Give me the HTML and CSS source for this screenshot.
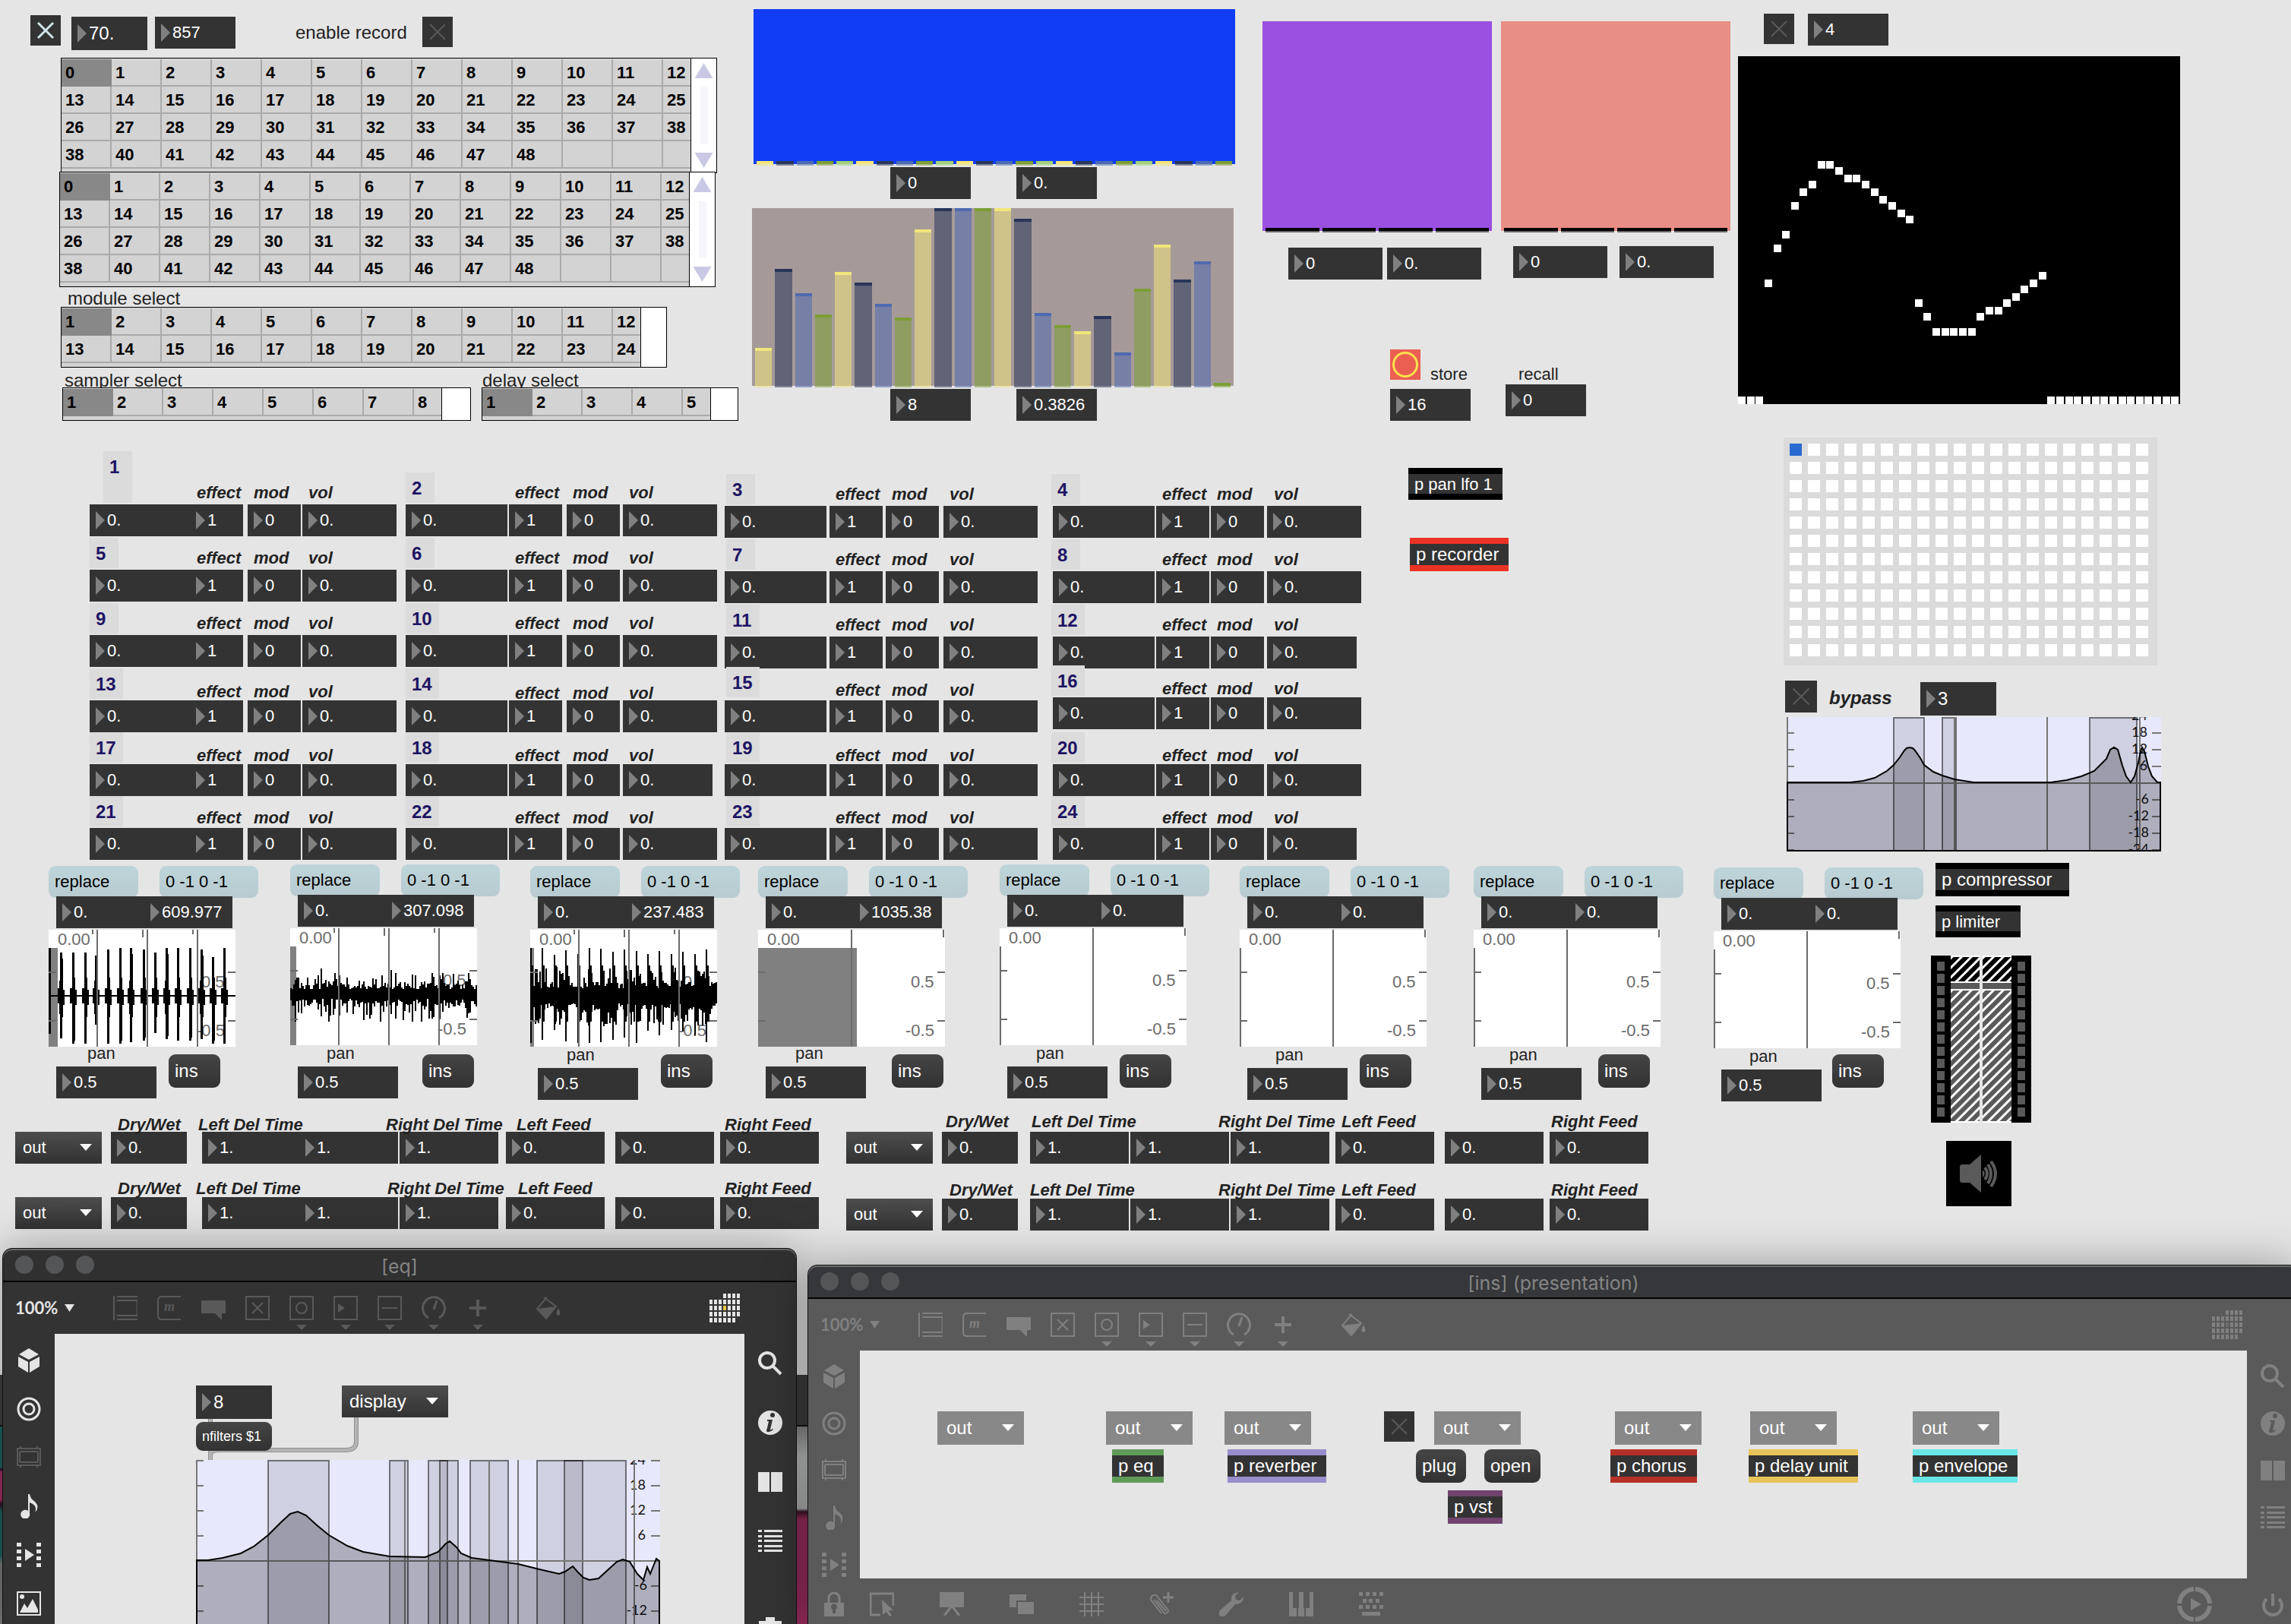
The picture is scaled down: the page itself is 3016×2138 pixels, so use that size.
FILE: index.html
```html
<!DOCTYPE html>
<html lang="en">
<head>
<meta charset="utf-8">
<meta name="viewport" content="width=device-width, initial-scale=1">
<title>Patcher</title>
<link rel="stylesheet" href="styles.css">
</head>
<body>
<svg class="symbols" aria-hidden="true">
  <symbol id="i-object" viewBox="0 0 32 32"><path class="ln" d="M1 0V32M5 1H32M5 6H32M5 26H32M5 31H32"/><path class="hair" d="M31 6V26"/></symbol>
  <symbol id="i-message" viewBox="0 0 32 32"><path class="ln" d="M31 1H6Q1 1 1 6V26Q1 31 6 31H31"/></symbol>
  <symbol id="i-comment" viewBox="0 0 32 32"><path class="fl" d="M0 6H32V23H27V32L18 23H0Z"/></symbol>
  <symbol id="i-toggle" viewBox="0 0 32 32"><path class="ln" d="M1 1H31V31H1ZM9 9L23 23M23 9L9 23"/></symbol>
  <symbol id="i-button" viewBox="0 0 32 32"><path class="ln" d="M1 1H31V31H1Z"/><circle class="ln" cx="16" cy="16" r="7"/></symbol>
  <symbol id="i-number" viewBox="0 0 32 32"><path class="ln" d="M1 1H31V31H1Z"/><path class="fl" d="M6 10L15 16L6 22Z"/></symbol>
  <symbol id="i-slider" viewBox="0 0 32 32"><path class="ln" d="M1 1H31V31H1ZM6 16H26"/></symbol>
  <symbol id="i-dial" viewBox="0 0 32 32"><path class="thick" d="M9 29A14.500 14.500 0 1 1 23 29M16 18L20 6"/></symbol>
  <symbol id="i-plus" viewBox="0 0 32 32"><path class="fl" d="M14 5H18V14H27V18H18V27H14V18H5V14H14Z"/></symbol>
  <symbol id="i-paint" viewBox="0 0 32 32"><path class="ln" d="M10 2L26 14L13 30L1 17L14 2"/><path class="fl" d="M1 17L26 14L13 31ZM29 16Q34 25 29 26Q24 25 29 16Z"/></symbol>
  <symbol id="i-cube" viewBox="0 0 32 32"><path class="fl" d="M16 0L29 8L16 15L3 8ZM2 11L15 18V32L2 24ZM30 11L17 18V32L30 24Z"/></symbol>
  <symbol id="i-target" viewBox="0 0 32 32"><circle class="thick" cx="16" cy="16" r="14"/><circle class="thick" cx="16" cy="16" r="7"/></symbol>
  <symbol id="i-amp" viewBox="0 0 32 32"><path class="ln" d="M1 4H31V26H1ZM4 8H28M4 22H28M5 1V4M27 1V4M5 26V29M27 26V29M28 8V22M4 8V22"/></symbol>
  <symbol id="i-note" viewBox="0 0 32 32"><path class="fl" d="M15 0H17Q18 6 24 10Q31 17 24 24Q28 15 17 11V25A6 6 0 1 1 15 22Z"/></symbol>
  <symbol id="i-film" viewBox="0 0 32 32"><path class="fl" d="M0 0H6V5H0ZM0 9H6V14H0ZM0 18H6V23H0ZM0 27H6V32H0ZM26 0H32V5H26ZM26 9H32V14H26ZM26 18H32V23H26ZM26 27H32V32H26ZM11 8L23 16L11 24Z"/></symbol>
  <symbol id="i-image" viewBox="0 0 32 32"><path class="ln" d="M1 1H31V31H1Z"/><path class="fl" d="M4 28L10 16L14 22L21 10L28 24V28Z"/><circle class="fl" cx="7" cy="7" r="3"/></symbol>
  <symbol id="i-search" viewBox="0 0 32 32"><circle class="heavy" cx="12" cy="12" r="10"/><path class="heavy" d="M19 19L30 30"/></symbol>
  <symbol id="i-info" viewBox="0 0 32 32"><circle class="fl" cx="16" cy="16" r="16"/><circle class="cut" cx="19" cy="6" r="3"/><path class="cut" d="M12 12H19L16 25Q17 26 19 24L20 25Q16 29 12 28Q10 27 12 23L14 14H12Z"/></symbol>
  <symbol id="i-book" viewBox="0 0 32 32"><path class="fl" d="M0 3H15V29H0ZM17 3H32V29H17Z"/></symbol>
  <symbol id="i-list" viewBox="0 0 32 32"><path class="fl" d="M0 1H5V4H0ZM8 1H32V4H8ZM0 8H5V11H0ZM8 8H32V11H8ZM0 14H5V17H0ZM8 14H32V17H8ZM0 21H5V24H0ZM8 21H32V24H8ZM0 27H5V30H0ZM8 27H32V30H8Z"/></symbol>
  <symbol id="i-camera" viewBox="0 0 32 32"><path class="fl" d="M10 0H22V5H31V30H1V5H10Z"/></symbol>
  <symbol id="i-lock" viewBox="0 0 32 32"><path class="thick" d="M9 15V8A7 7 0 0 1 23 8V15"/><path class="fl" fill-rule="evenodd" d="M3 14H29V32H3ZM14 28H18V23A4 4 0 1 0 14 23Z"/></symbol>
  <symbol id="i-cursor" viewBox="0 0 32 32"><path class="thick" d="M14 30H1V2H31V18"/><path class="fl" d="M16 10L31 24H25L29 31L26 32L22 26L17 30Z"/></symbol>
  <symbol id="i-easel" viewBox="0 0 32 32"><path class="fl" d="M0 0H32V20H0Z"/><path class="thick" d="M16 18L6 31M16 18L26 31"/></symbol>
  <symbol id="i-layers" viewBox="0 0 32 32"><path class="fl" d="M0 3H22V11H9V20H0ZM11 13H32V29H11Z"/></symbol>
  <symbol id="i-grid" viewBox="0 0 32 32"><path class="ln" d="M7 0V32M16 0V32M25 0V32M0 7H32M0 16H32M0 25H32"/></symbol>
  <symbol id="i-clip" viewBox="0 0 32 32"><path class="ln" d="M6 10L20 28A4 4 0 0 0 25 24L10 5A5 5 0 0 0 2 10L16 28M22 25L10 11"/><path class="thick" d="M25 0V14M18 7H32"/></symbol>
  <symbol id="i-wrench" viewBox="0 0 32 32"><path class="fl" d="M26 0L21 5L22 10L27 11L32 6Q32 16 21 16L8 31Q4 34 1 31Q-2 28 1 24L16 11Q15 1 26 0Z"/></symbol>
  <symbol id="i-piano" viewBox="0 0 32 32"><path class="fl" d="M0 0H5V21H10V32H0ZM12 21H13V0H19V21H20V32H12ZM27 0H32V32H22V21H27Z"/></symbol>
  <symbol id="i-keys" viewBox="0 0 32 32"><path class="fl" d="M0 0H5V5H0ZM9 0H14V5H9ZM18 0H23V5H18ZM27 0H32V5H27ZM5 9H10V14H5ZM13 9H18V14H13ZM22 9H27V14H22ZM0 17H5V22H0ZM9 17H14V22H9ZM18 17H23V22H18ZM27 17H32V22H27ZM4 26H28V31H4Z"/></symbol>
  <symbol id="i-play" viewBox="0 0 46 46"><path class="ring" d="M24 3A20 20 0 0 1 43 22M43 25A20 20 0 0 1 24 43M22 43A20 20 0 0 1 3 25M3 22A20 20 0 0 1 22 3"/><path class="fl" d="M18 15L32 23L18 31Z"/></symbol>
  <symbol id="i-power" viewBox="0 0 32 32"><path class="heavy" d="M16 2V18M8 9A12 12 0 1 0 24 9"/></symbol>
  <symbol id="i-calendar" viewBox="0 0 40 38"><path class="fl" d="M18 0h4v6h-4zM24 0h4v6h-4zM30 0h4v6h-4zM36 0h4v6h-4zM0 8h4v6h-4zM6 8h4v6h-4zM12 8h4v6h-4zM18 8h4v6h-4zM24 8h4v6h-4zM30 8h4v6h-4zM36 8h4v6h-4zM0 16h4v6h-4zM6 16h4v6h-4zM12 16h4v6h-4zM24 16h4v6h-4zM30 16h4v6h-4zM36 16h4v6h-4zM0 24h4v6h-4zM6 24h4v6h-4zM12 24h4v6h-4zM18 24h4v6h-4zM24 24h4v6h-4zM30 24h4v6h-4zM36 24h4v6h-4zM0 32h4v6h-4zM6 32h4v6h-4zM12 32h4v6h-4zM18 32h4v6h-4zM24 32h4v6h-4zM30 32h4v6h-4z"/><path class="today" d="M18 16h4v6h-4z"/></symbol>
</svg>

<div class="desktop">
  <main class="patcher" id="patcher"></main>
  <div class="patcher-bar"></div>
  <div class="wallpaper"></div>

  <section class="window window-eq" aria-label="eq">
    <header class="titlebar">
      <span class="lights"><i></i><i></i><i></i></span>
      <h2>[eq]</h2>
    </header>
    <nav class="toolbar" aria-label="eq objects">
      <button class="zoom">100%</button>
      <button class="tool" aria-label="Object"><svg><use href="#i-object"/></svg></button>
      <button class="tool" aria-label="Message"><svg><use href="#i-message"/></svg><span class="glyph">m</span></button>
      <button class="tool" aria-label="Comment"><svg><use href="#i-comment"/></svg></button>
      <button class="tool" aria-label="Toggle"><svg><use href="#i-toggle"/></svg></button>
      <button class="tool more" aria-label="Button"><svg><use href="#i-button"/></svg></button>
      <button class="tool more" aria-label="Number"><svg><use href="#i-number"/></svg></button>
      <button class="tool more" aria-label="Slider"><svg><use href="#i-slider"/></svg></button>
      <button class="tool more" aria-label="Dial"><svg><use href="#i-dial"/></svg></button>
      <button class="tool more" aria-label="Add"><svg><use href="#i-plus"/></svg></button>
      <button class="tool paint" aria-label="Format"><svg><use href="#i-paint"/></svg></button>
      <button class="calendar" aria-label="Grid"><svg><use href="#i-calendar"/></svg></button>
    </nav>
    <nav class="side" aria-label="eq browsers">
      <button class="tool" aria-label="Packages"><svg><use href="#i-cube"/></svg></button>
      <button class="tool" aria-label="Beap"><svg><use href="#i-target"/></svg></button>
      <button class="tool dim" aria-label="Plug-ins"><svg><use href="#i-amp"/></svg></button>
      <button class="tool" aria-label="Audio"><svg><use href="#i-note"/></svg></button>
      <button class="tool" aria-label="Video"><svg><use href="#i-film"/></svg></button>
      <button class="tool" aria-label="Images"><svg><use href="#i-image"/></svg></button>
    </nav>
    <div class="canvas" id="canvas-eq"></div>
    <nav class="side side-right" aria-label="eq panels">
      <button class="tool" aria-label="Search"><svg><use href="#i-search"/></svg></button>
      <button class="tool" aria-label="Inspector"><svg><use href="#i-info"/></svg></button>
      <button class="tool" aria-label="Reference"><svg><use href="#i-book"/></svg></button>
      <button class="tool" aria-label="Console"><svg><use href="#i-list"/></svg></button>
      <button class="tool snapshot" aria-label="Snapshots"><svg><use href="#i-camera"/></svg></button>
    </nav>
  </section>

  <section class="window window-ins" aria-label="ins">
    <header class="titlebar">
      <span class="lights"><i></i><i></i><i></i></span>
      <h2>[ins] (presentation)</h2>
    </header>
    <nav class="toolbar" aria-label="ins objects">
      <button class="zoom">100%</button>
      <button class="tool" aria-label="Object"><svg><use href="#i-object"/></svg></button>
      <button class="tool" aria-label="Message"><svg><use href="#i-message"/></svg><span class="glyph">m</span></button>
      <button class="tool" aria-label="Comment"><svg><use href="#i-comment"/></svg></button>
      <button class="tool" aria-label="Toggle"><svg><use href="#i-toggle"/></svg></button>
      <button class="tool more" aria-label="Button"><svg><use href="#i-button"/></svg></button>
      <button class="tool more" aria-label="Number"><svg><use href="#i-number"/></svg></button>
      <button class="tool more" aria-label="Slider"><svg><use href="#i-slider"/></svg></button>
      <button class="tool more" aria-label="Dial"><svg><use href="#i-dial"/></svg></button>
      <button class="tool more" aria-label="Add"><svg><use href="#i-plus"/></svg></button>
      <button class="tool paint" aria-label="Format"><svg><use href="#i-paint"/></svg></button>
      <button class="calendar" aria-label="Grid"><svg><use href="#i-calendar"/></svg></button>
    </nav>
    <nav class="side" aria-label="ins browsers">
      <button class="tool" aria-label="Packages"><svg><use href="#i-cube"/></svg></button>
      <button class="tool" aria-label="Beap"><svg><use href="#i-target"/></svg></button>
      <button class="tool" aria-label="Plug-ins"><svg><use href="#i-amp"/></svg></button>
      <button class="tool" aria-label="Audio"><svg><use href="#i-note"/></svg></button>
      <button class="tool" aria-label="Video"><svg><use href="#i-film"/></svg></button>
    </nav>
    <div class="canvas" id="canvas-ins"></div>
    <nav class="side side-right" aria-label="ins panels">
      <button class="tool" aria-label="Search"><svg><use href="#i-search"/></svg></button>
      <button class="tool" aria-label="Inspector"><svg><use href="#i-info"/></svg></button>
      <button class="tool" aria-label="Reference"><svg><use href="#i-book"/></svg></button>
      <button class="tool" aria-label="Console"><svg><use href="#i-list"/></svg></button>
    </nav>
    <nav class="bottombar" aria-label="ins view">
      <button class="tool lock" aria-label="Lock"><svg><use href="#i-lock"/></svg></button>
      <button class="tool" aria-label="Select"><svg><use href="#i-cursor"/></svg></button>
      <button class="tool" aria-label="Presentation"><svg><use href="#i-easel"/></svg></button>
      <button class="tool" aria-label="Layers"><svg><use href="#i-layers"/></svg></button>
      <button class="tool" aria-label="Snap to grid"><svg><use href="#i-grid"/></svg></button>
      <button class="tool" aria-label="Clippings"><svg><use href="#i-clip"/></svg></button>
      <button class="tool" aria-label="Tools"><svg><use href="#i-wrench"/></svg></button>
      <button class="tool" aria-label="Piano"><svg><use href="#i-piano"/></svg></button>
      <button class="tool" aria-label="Keyboard"><svg><use href="#i-keys"/></svg></button>
      <button class="tool play" aria-label="Play"><svg><use href="#i-play"/></svg></button>
      <button class="tool power" aria-label="Audio power"><svg><use href="#i-power"/></svg></button>
    </nav>
  </section>
</div>
<script src="patch.js"></script>
</body>
</html>
```

FILE: styles.css
```css
* { box-sizing: border-box; }

body {
  margin: 0;
  font: 22px/28px "Liberation Sans", Arial, sans-serif;
  color: #222;
  background: #e5e5e5;
}

button, input, select {
  margin: 0;
  padding: 0;
  border: 0;
  border-radius: 0;
  font: inherit;
  color: inherit;
  background: none;
  appearance: none;
}

.symbols { position: absolute; width: 0; height: 0; }

.desktop {
  position: relative;
  display: flex;
  flex-direction: column;
  height: 100vh;
  overflow: hidden;
}
.patcher { position: relative; flex: 1; background: #e5e5e5; }
.patcher-bar { flex: none; height: 68px; background: #3f3f3f; border-bottom: 2px solid #111; }
.wallpaper {
  flex: none;
  height: 260px;
  background:
    linear-gradient(#1f5f5c 54px, #2a1020 56px, #9c2e5f 60px, #9c2e5f 96px, #2a1020 102px, #1f5f5c 112px, #1f5f5c 170px, #777 180px) 0 0 / 6px 100% no-repeat,
    linear-gradient(#8a8a8a, #c2c4c4 40px, #b5b7b7 108px, #3a1428 112px, #9c2e5f 122px, #9c2e5f);
}

/* ---- objects on the patcher ---- */
.obj { position: absolute; }
.num {
  display: block;
  height: 42px;
  background: #333;
  color: #fff;
}
.num::before {
  content: "";
  position: absolute;
  left: 8px;
  top: 50%;
  width: 12px;
  height: 24px;
  margin-top: -12px;
  background: #808080;
  clip-path: polygon(0 0, 100% 50%, 0 100%);
}
.num input { display: block; width: 100%; height: 100%; padding-left: 23px; }
.big { height: 44px; font-size: 24px; }

.toggle { width: 40px; height: 40px; background: #333; color: #595959; }
.toggle.on { color: #cfe3ea; }
.toggle.large { width: 42px; height: 42px; }
.toggle input { position: absolute; inset: 0; width: 100%; height: 100%; }
.toggle svg { display: block; width: 100%; height: 100%; pointer-events: none; }
.toggle path { fill: none; stroke: currentColor; stroke-width: 2; }
.toggle.on path { stroke-width: 3; }

.comment { white-space: nowrap; }
.comment.wide { font-size: 24px; }
.comment.strong { font-weight: bold; font-style: italic; }

.tag {
  min-width: 38px;
  height: 40px;
  padding: 7px 8px 5px;
  font-size: 24px;
  font-weight: bold;
  color: #1e1464;
  background: #dbdbdb;
}
.tag.two { min-width: 44px; }
.tag.tall { height: 68px; }

.msg {
  height: 42px;
  padding-left: 8px;
  text-align: left;
  color: #000;
  border-radius: 9px;
  background: linear-gradient(#bdd5d9, #b8cbd0);
}
.msg.dark { color: #fff; background: linear-gradient(#454545, #323232); }
.msg.dark.big { height: 44px; }
.msg.dark.small { height: 38px; font-size: 18px; }

.menu { height: 42px; color: #fff; background: linear-gradient(#4d4d4d, #323232); }
.menu select { display: block; width: 100%; height: 100%; padding-left: 10px; }
.menu::after {
  content: "";
  position: absolute;
  right: 13px;
  top: 50%;
  width: 16px;
  height: 9px;
  margin-top: -5px;
  background: #fff;
  clip-path: polygon(0 0, 100% 0, 50% 100%);
  pointer-events: none;
}
.menu.wide { font-size: 24px; }
.menu.flat { height: 44px; font-size: 24px; background: #888; }
.menu.flat select { padding-left: 12px; }

.box {
  height: 42px;
  padding-left: 8px;
  text-align: left;
  color: #fff;
  background: #333;
  border: solid #000;
  border-width: 8px 0;
}
.box.big { height: 44px; }
.box.red { border-color: #ea3323; }
.box.green { border-color: #5f9b57; }
.box.lilac { border-color: #998dcb; }
.box.plum { border-color: #70446e; }
.box.brick { border-color: #b53127; }
.box.gold { border-color: #e8c35a; }
.box.aqua { border-color: #69e6e6; }

/* cell blocks */
.cells { display: flex; border: 1px solid #000; background: #d3d3d3; }
.cells table { border-spacing: 0; table-layout: fixed; margin-top: 1px; height: 1px; }
.cells td {
  width: 66px;
  height: 36px;
  padding: 2px 0 0 5px;
  font-weight: bold;
  line-height: 32px;
  color: #000;
  border: solid #aaa;
  border-width: 0 2px 2px 0;
}
.cells td:last-child { width: 36px; border-right: 0; }
.cells td.on { background: #888; border-color: #888; }
.cells .scroll {
  flex: 1;
  display: flex;
  flex-direction: column;
  align-items: center;
  gap: 12px;
  padding: 6px 0;
  background: #fff;
  border-left: 1px solid #000;
}
.scroll .up, .scroll .down { width: 24px; height: 20px; background: #c9c9e5; clip-path: polygon(50% 0, 100% 100%, 0 100%); }
.scroll .down { clip-path: polygon(0 0, 100% 0, 50% 100%); }
.scroll .track { flex: 1; width: 10px; background: #f5f5fb; }

/* multisliders */
.sliders { display: flex; align-items: flex-end; gap: 4px; padding: 0 4px; }
.sliders.blue { background: #103df5; }
.sliders.taupe { background: #a69a99; }
.sliders.violet { background: #9b50e1; }
.sliders.salmon { background: #e98e86; }
.bar { position: relative; flex: 1; margin-bottom: -2px; border-top: 4px solid; }
.bar::before { content: ""; position: absolute; inset: 0; background: currentColor; opacity: .55; }
.yellow { color: #f0e67b; }
.navy { color: #28365a; }
.steel { color: #4e6ab0; }
.olive { color: #7c9e35; }
.mint { color: #a1d17b; }
.ink { color: #000; }

.steps { display: grid; background: #000; }
.steps i { justify-self: start; width: 10px; height: 10px; background: #fff; }

.bang { display: grid; place-items: center; width: 40px; height: 40px; background: #ea5f52; }
.bang::before { content: ""; width: 28px; height: 28px; border: 3px solid #fbe04b; border-radius: 50%; }

.matrix {
  display: grid;
  grid-template-columns: repeat(20, 16px);
  grid-auto-rows: 16px;
  gap: 8px;
  padding: 8px;
  background: #dbdbdb;
}
.matrix input { width: 16px; height: 16px; background: #fff; }
.matrix input:checked { background: #2a6ad0; }

/* graphs */
.graph { display: block; overflow: hidden; }
.graph text { font: 18px/20px Lato, sans-serif; text-anchor: end; fill: #111; }
.graph .tick { stroke: #777; stroke-width: 2; fill: none; }
.graph .area { fill: #000; fill-opacity: .25; }
.graph .curve { stroke: #000; stroke-width: 2; fill: none; }
.graph .band { fill: #000; fill-opacity: .1; stroke: #000; stroke-opacity: .5; stroke-width: 2; }
.graph .back { fill: #e8e8fd; }

.wave { display: block; background: #fff; }
.wave text { font-size: 22px; fill: #6b6b6b; }
.wave .line { stroke: #6b6b6b; stroke-width: 2; fill: none; }
.wave .sel { fill: #808080; }
.wave .audio { fill: #000; }

/* gain strip */
.gain { display: flex; height: 220px; background: #e5e5e5; }
.meter { display: flex; flex-direction: column; gap: 4px; width: 26px; padding: 8px; background: #000; }
.meter i { flex: 1; background: #595959; }
.fader {
  display: flex;
  flex-direction: column;
  gap: 2px;
  width: 38px;
  padding: 2px 0;
  background: #fff;
}
.fader + .fader { margin-left: 4px; }
.fader .head { height: 32px; background: repeating-linear-gradient(135deg, #fff 0 2px, #000 3px 8px, #fff 9px); }
.fader .knob { height: 8px; background: #5a5a5a; }
.fader .tail { flex: 1; background: repeating-linear-gradient(135deg, #fff 0 2px, #5a5a5a 3px 8px, #fff 9px); }

.dac { width: 86px; height: 86px; background: #000; }
.dac svg { display: block; margin: 18px; width: 52px; height: 50px; }
.dac .fl { fill: #5a5a5a; }
.dac .ln { fill: none; stroke: #5a5a5a; stroke-width: 4; }

.cord { fill: none; stroke: #909090; stroke-width: 6; }
.cord.inner { stroke: #b4b4b4; stroke-width: 4; }

/* ---- windows ---- */
.window {
  --frame: #333;
  --today: #e8c93e;
  position: absolute;
  display: grid;
  grid-template-rows: 44px 68px minmax(0, 1fr);
  grid-template-columns: 68px minmax(0, 1fr) 68px;
  overflow: hidden;
  border-radius: 12px 12px 0 0;
  color: #e5e5e5;
  background: var(--frame);
  box-shadow: 0 0 0 1px #111, 0 0 60px rgba(0, 0, 0, .35);
}
.window-eq { left: 4px; top: 1644px; bottom: 0; width: 1044px; }
.window-ins {
  --frame: #5a5a5a;
  --today: #6e6e6e;
  left: 1064px;
  top: 1666px;
  right: -10px;
  bottom: -8px;
  color: #808080;
  grid-template-rows: 44px 68px minmax(0, 1fr) 68px;
}

.titlebar {
  grid-column: 1 / -1;
  position: relative;
  display: flex;
  align-items: center;
  justify-content: center;
  border-bottom: 2px solid #000;
  background: #303030;
  box-shadow: inset 0 2px 0 #6a6a6a;
  border-radius: 12px 12px 0 0;
}
.window-ins .titlebar { background: #36373a; }
.titlebar h2 { margin: 0; padding-top: 4px; font: 400 25px/28px Inter, sans-serif; color: #858585; }
.lights { position: absolute; left: 16px; display: flex; gap: 16px; }
.lights i { width: 24px; height: 24px; border-radius: 50%; background: #545557; }

.toolbar { grid-column: 1 / -1; display: flex; align-items: center; color: #595959; }
.window-ins .toolbar { color: #808080; }
.zoom {
  position: relative;
  width: 132px;
  padding-left: 16px;
  text-align: left;
  font: bold 22px/28px Lato, sans-serif;
  color: #e5e5e5;
}
.zoom::after {
  content: "";
  position: absolute;
  left: 81px;
  top: 9px;
  width: 13px;
  height: 10px;
  background: currentColor;
  clip-path: polygon(0 0, 100% 0, 50% 100%);
}
.window-ins .zoom { color: #808080; }
.tool { position: relative; display: flex; align-items: center; justify-content: center; width: 58px; height: 64px; }
.tool svg { width: 32px; height: 32px; }
.more::after {
  content: "";
  position: absolute;
  left: 22px;
  bottom: 3px;
  width: 14px;
  height: 7px;
  background: currentColor;
  clip-path: polygon(0 0, 100% 0, 50% 100%);
}
.glyph { position: absolute; inset: 18px 0 auto; text-align: center; font: italic bold 18px/24px "Liberation Serif", serif; }
.paint { margin-left: 35px; }
.calendar { margin: 0 74px 0 auto; color: #e5e5e5; line-height: 0; }
.calendar svg { width: 40px; height: 38px; }
.today { fill: var(--today); }
.window-ins .calendar { color: #808080; }

.side { display: flex; flex-direction: column; align-items: center; padding-top: 3px; }
.side .tool { flex: none; }
.side .dim { color: #595959; }
.side-right { padding-top: 0; }
.side-right .tool { height: 78px; }
.side-right .snapshot { margin-top: 38px; }
.window-ins .side .tool { height: 62px; }
.window-ins .side-right { padding-top: 3px; }

.canvas { position: relative; overflow: hidden; color: #222; background: #e5e5e5; }

.bottombar { grid-column: 1 / -1; display: flex; align-items: center; }
.bottombar .tool { width: 92px; }
.bottombar .lock { width: 68px; margin-right: -17px; }
.bottombar .play { width: 68px; margin-left: auto; }
.bottombar .play svg { width: 46px; height: 46px; }
.bottombar .power { width: 68px; margin-left: 35px; }

.fl { fill: currentColor; }
.ln { fill: none; stroke: currentColor; stroke-width: 2; }
.hair { fill: none; stroke: currentColor; stroke-width: 1; }
.thick { fill: none; stroke: currentColor; stroke-width: 3; }
.heavy { fill: none; stroke: currentColor; stroke-width: 4; }
.ring { fill: none; stroke: currentColor; stroke-width: 6; }
.cut { fill: var(--frame); }
```

FILE: patch.js
```js
const SVG = "http://www.w3.org/2000/svg";
const main = document.getElementById("patcher");
const eq = document.getElementById("canvas-eq");
const ins = document.getElementById("canvas-ins");
let serial = 0;

function place(host, node, x, y, w, h) {
  node.classList.add("obj");
  node.style.left = x + "px";
  node.style.top = y + "px";
  if (w) node.style.width = w + "px";
  if (h) node.style.height = h + "px";
  host.append(node);
  return node;
}
function make(tag, cls, text) {
  const node = document.createElement(tag);
  if (cls) node.className = cls;
  if (text !== undefined) node.textContent = text;
  return node;
}
function num(host, x, y, w, value, cls = "", name = "value") {
  const box = make("label", "num " + cls);
  const input = make("input");
  input.type = "text";
  input.value = value;
  input.id = "n" + ++serial;
  input.setAttribute("aria-label", name);
  box.append(input);
  place(host, box, x, y, w);
  return input.id;
}
/* a comment is placed by the baseline of its text */
function comment(x, baseline, text, cls = "", target) {
  const node = make(target ? "label" : "span", "comment " + cls, text);
  if (target) node.htmlFor = target;
  return place(main, node, x, baseline - 21);
}
function toggle(host, x, y, cls = "", name = "toggle") {
  const box = make("label", "toggle " + cls);
  box.innerHTML = `<input type="checkbox" aria-label="${name}" ${cls === "on" ? "checked" : ""}><svg viewBox="0 0 40 40"><path d="M10 10L30 30M30 10L10 30"/></svg>`;
  place(host, box, x, y);
}
function menu(host, x, y, w, text, cls = "") {
  const box = make("label", "menu " + cls);
  box.innerHTML = `<select aria-label="${text}"><option>${text}</option></select>`;
  place(host, box, x, y, w);
}
const message = (host, x, y, w, text, cls = "") => place(host, make("button", "msg " + cls, text), x, y, w);
const box = (host, x, y, w, text, cls = "") => place(host, make("button", "box " + cls, text), x, y, w);

function cells(x, y, w, h, name, rows, scroll) {
  const wrap = make("div", "cells");
  const table = make("table");
  table.setAttribute("aria-label", name);
  rows.forEach((row, r) => {
    const tr = table.insertRow();
    row.forEach((value, c) => {
      const td = tr.insertCell();
      td.textContent = value;
      if (!r && !c) td.className = "on";
    });
  });
  const bar = make("div", "scroll");
  if (scroll) bar.append(make("i", "up"), make("i", "track"), make("i", "down"));
  wrap.append(table, bar);
  place(main, wrap, x, y, w, h);
}
const range = (a, b) => Array.from({ length: b - a + 1 }, (_, i) => a + i);

function sliders(x, y, w, h, cls, values, colours) {
  const wrap = make("div", "sliders " + cls);
  values.forEach((v, i) => {
    const bar = make("i", "bar " + colours[i % colours.length]);
    bar.style.height = v + 2 + "px";
    wrap.append(bar);
  });
  place(main, wrap, x, y, w, h);
}

function svg(host, cls, x, y, w, h, markup) {
  const node = document.createElementNS(SVG, "svg");
  node.setAttribute("class", cls);
  node.setAttribute("viewBox", `0 0 ${w} ${h}`);
  node.innerHTML = markup;
  return place(host, node, x, y, w, h);
}

/* transport */
toggle(main, 40, 20, "on", "run");
num(main, 94, 22, 100, "70.", "big", "tempo");
num(main, 204, 22, 106, "857", "", "count");
comment(389, 50, "enable record", "wide");
toggle(main, 556, 22, "", "enable record");

const presets = [range(0, 12), range(13, 25), range(26, 38), [38, ...range(40, 48), "", "", ""]];
cells(80, 76, 864, 152, "presets a", presets, true);
cells(78, 226, 864, 152, "presets b", presets, true);
comment(89, 400, "module select", "wide");
cells(80, 404, 798, 80, "module select", [range(1, 12), range(13, 24)]);
comment(85, 508, "sampler select", "wide");
comment(635, 508, "delay select", "wide");
cells(82, 510, 538, 44, "sampler select", [range(1, 8)]);
cells(634, 510, 338, 44, "delay select", [range(1, 5)]);

/* step sliders */
sliders(992, 12, 634, 204, "blue", Array(24).fill(4), ["yellow", "navy", "steel", "olive", "mint"]);
num(main, 1172, 220, 106, "0");
num(main, 1338, 220, 106, "0.");
sliders(990, 274, 634, 234, "taupe",
  [50, 154, 122, 94, 150, 136, 108, 90, 206, 234, 234, 234, 234, 220, 96, 80, 72, 92, 44, 128, 186, 140, 164, 4],
  ["yellow", "navy", "steel", "olive"]);
num(main, 1172, 512, 106, "8");
num(main, 1338, 512, 106, "0.3826");
sliders(1662, 28, 302, 276, "violet", [4, 4, 4, 4], ["ink"]);
sliders(1976, 28, 302, 276, "salmon", [4, 4, 4, 4], ["ink"]);
num(main, 1696, 326, 124, "0");
num(main, 1826, 326, 124, "0.");
num(main, 1992, 324, 124, "0");
num(main, 2132, 324, 124, "0.");

place(main, make("button", "bang"), 1830, 460).setAttribute("aria-label", "store");
comment(1883, 500, "store", "", num(main, 1830, 512, 106, "16", "", "store"));
comment(1999, 500, "recall", "", num(main, 1982, 506, 106, "0", "", "recall"));

toggle(main, 2322, 18, "", "sequence");
num(main, 2380, 18, 106, "4");
const steps = make("div", "steps");
steps.style.gridTemplateColumns = "repeat(50, 1fr)";
[...Array(3).fill(527), 373, 327, 309, 271, 253, 243, 217, 217, 225, 235, 235, 243, 253, 263, 271, 281, 289,
  399, 417, 437, 437, 437, 437, 437, 417, 409, 409, 399, 391, 381, 373, 363, ...Array(15).fill(527)]
  .forEach((cy) => {
    const dot = make("i");
    dot.style.marginTop = cy - 79 + "px";
    steps.append(dot);
  });
place(main, steps, 2288, 74, 582, 458);

/* modules */
const columns = [
  { x: [118, 250, 326, 398], w: [134, 70, 70, 124], tag: 118, text: [259, 334, 406] },
  { x: [534, 670, 746, 820], w: [134, 70, 70, 124], tag: 534, text: [678, 754, 828] },
  { x: [954, 1092, 1166, 1242], w: [134, 70, 70, 124], tag: 956, text: [1100, 1174, 1250] },
  { x: [1386, 1522, 1594, 1668], w: [134, 70, 70, 124], tag: 1384, text: [1530, 1602, 1677] },
];
const boxY = [[664, 750, 836, 922, 1006, 1090], [664, 750, 836, 922, 1006, 1090], [666, 752, 838, 922, 1006, 1090], [666, 752, 838, 918, 1006, 1090]];
const tagY = [[594, 708, 794, 880, 964, 1048], [622, 708, 794, 880, 964, 1048], [624, 710, 796, 878, 964, 1048], [624, 710, 796, 876, 964, 1048]];
const textY = [[656, 742, 828, 918, 1002, 1084], [656, 742, 828, 920, 1002, 1084], [658, 744, 830, 916, 1002, 1084], [658, 744, 830, 914, 1002, 1084]];
const narrow = new Set([12, 18, 24]);
for (let r = 0; r < 6; r++) {
  columns.forEach((col, c) => {
    const n = r * 4 + c + 1;
    const y = boxY[c][r];
    num(main, col.x[0], y, col.w[0], "0.", "", "module " + n);
    ["effect", "mod", "vol"].forEach((name, i) => {
      const w = col.w[i + 1] - (i === 2 && narrow.has(n) ? 6 : 0);
      const id = num(main, col.x[i + 1], y, w, ["1", "0", "0."][i], "", name + " " + n);
      comment(col.text[i], textY[c][r], name, "strong", id);
    });
    place(main, make("span", "tag" + (n > 9 ? " two" : "") + (n === 1 ? " tall" : ""), n), n === 1 ? 136 : col.tag, tagY[c][r]);
  });
}
box(main, 1854, 616, 124, "p pan lfo 1");
box(main, 1856, 708, 130, "p recorder", "big red");

/* samplers */
function random(seed) {
  return () => ((seed = (seed * 16807) % 2147483647) / 2147483647);
}
const bar = (x, up, down, w = 2) => `M${x} ${87 - up}h${w}v${up + down}h-${w}Z`;
function beats() {
  let d = bar(0, 1, 1, 246) + bar(0, 63, 50, 3);
  [[15, 57, 56], [31, 57, 63], [47, 57, 63], [61, 53, 38], [77, 61, 63], [93, 63, 63], [107, 63, 61], [124, 61, 59],
    [139, 57, 49], [154, 63, 57], [169, 63, 59], [185, 63, 59], [200, 61, 57], [215, 51, 63], [230, 63, 63]]
    .forEach(([x, up, down], i) => {
      d += bar(x, up, down, 3) + bar(x + 3, i % 3 ? 24 : up - 8, i % 2 ? down - 4 : 28, 1);
      d += bar(x - 3, 10, 10, 3) + (i % 3 ? "" : bar(x - 1, 20, 24)) + bar(x + 4, 8, 12);
    });
  return d;
}
function noise() {
  const rnd = random(77);
  let d = "";
  for (let x = 0; x < 246; x += 2) {
    const k = rnd() > 0.6 ? 1 : 0.35;
    d += bar(x, Math.round(7 + 22 * k * rnd()), Math.round(6 + 30 * k * rnd()));
  }
  return d + bar(40, 34, 20) + bar(132, 32, 26) + bar(50, 10, 36) + bar(118, 10, 36) + bar(172, 8, 36);
}
function loop() {
  const rnd = random(19);
  let d = "";
  for (let x = 0; x < 246; x += 2) {
    const phase = (x % 31) / 31;
    const k = phase < 0.65 ? 1 : 0.3;
    d += bar(x, Math.round(10 + 28 * k * rnd()), Math.round(10 + 30 * k * rnd()));
  }
  for (let i = 0; i < 16; i++) {
    const x = Math.round(i * 15.400);
    d += bar(x, 54 + Math.round(9 * rnd()), 45 + Math.round(18 * rnd())) + bar(x + 2, 40, 34);
  }
  return d;
}
function wave(x, y, kind) {
  let m = `<text x="12" y="20">0.00</text><text x="201" y="76">0.5</text><text x="194" y="140">-0.5</text>`;
  if (kind === "cleared") m += `<rect class="sel" x="0" y="24" width="130" height="130"/>`;
  const audio = { beats, noise, loop }[kind];
  if (audio) {
    m += `<rect class="sel" x="0" y="24" width="${{ beats: 12, noise: 8, loop: 5 }[kind]}" height="130"/>`;
    m += `<path class="audio" d="${audio()}"/>`;
    m += `<path class="line" d="M64 0V154M130 0V154M196 0V154M58 0V6M124 0V10M190 0V6"/>`;
  } else {
    m += `<path class="line" d="M123 0V154M244 0V10${kind ? "" : "M1 24V154"}"/>`;
  }
  m += `<path class="line" d="M0 56H10M0 120H10M236 56H246M236 120H246"/>`;
  svg(main, "wave", x, y, 246, 154, m);
}
[
  [64, 1140, 1404, 222, "609.977", "beats", 115],
  [382, 1138, 1404, 556, "307.098", "noise", 430],
  [698, 1140, 1406, 870, "237.483", "loop", 746],
  [998, 1140, 1404, 1174, "1035.38", "cleared", 1047],
  [1316, 1138, 1404, 1474, "0.", "", 1364],
  [1632, 1140, 1406, 1790, "0.", "", 1679],
  [1940, 1140, 1406, 2104, "0.", "", 1987],
  [2256, 1142, 1408, 2412, "0.", "", 2303],
].forEach(([x, y, panY, insX, length, kind, panX]) => {
  message(main, x, y, 118, "replace");
  message(main, x + 146, y, 130, "0 -1 0 -1");
  num(main, x + 10, y + 40, 116, "0.", "", "start");
  num(main, x + 126, y + 40, 116, length, "", "end");
  wave(x, y + 84, kind);
  comment(panX, panY - 10, "pan", "", num(main, x + 10, panY, 132, "0.5", "", "pan"));
  message(main, insX, 1388, 68, "ins", "dark big");
});

/* delays */
const delayNames = ["Dry/Wet", "Left Del Time", "", "Right Del Time", "Left Feed", "", "Right Feed"];
[
  [20, 1490, 1488, [146, 266, 394, 526, 666, 810, 948], [155, 261, 0, 508, 680, 0, 954]],
  [20, 1576, 1572, [146, 266, 394, 526, 666, 810, 948], [155, 258, 0, 510, 682, 0, 954]],
  [1114, 1490, 1484, [1240, 1356, 1488, 1620, 1758, 1902, 2040], [1245, 1358, 0, 1604, 1766, 0, 2042]],
  [1114, 1578, 1574, [1240, 1356, 1488, 1620, 1758, 1902, 2040], [1250, 1356, 0, 1604, 1766, 0, 2042]],
].forEach(([x, y, baseline, xs, labels]) => {
  menu(main, x, y, 114, "out");
  xs.forEach((bx, i) => {
    const id = num(main, bx, y, i ? 130 : 100, i >= 1 && i <= 3 ? "1." : "0.", "", delayNames[i] || "amount");
    if (delayNames[i]) comment(labels[i], baseline, delayNames[i], "strong", id);
  });
});

/* matrix and filter */
const matrix = make("div", "matrix");
for (let i = 0; i < 240; i++) {
  const cell = make("input");
  cell.type = "checkbox";
  cell.setAttribute("aria-label", "cell " + (i + 1));
  cell.checked = i === 0;
  matrix.append(cell);
}
place(main, matrix, 2348, 576, 492, 300);
toggle(main, 2350, 896, "large", "bypass");
comment(2408, 926, "bypass", "strong wide");
num(main, 2528, 898, 100, "3", "big", "filters");

function graph(host, x, y, w, h, zero, step, size, bands, lines, points, floor) {
  let m = `<rect class="back" width="${w}" height="${h}"/>`;
  m += bands.map(([a, b]) => `<rect class="band" x="${a}" y="1" width="${b - a}" height="${floor - 2}"/>`).join("");
  let ticks = `M1 0V${zero}M0 ${zero}H${w}` + lines.map((l) => `M${l} 0V${floor}`).join("");
  for (let k = -4; k <= 4; k++) {
    const ty = zero - k * step;
    ticks += `M0 ${ty}H10M${w - 12} ${ty}H${w}`;
    if (k) m += `<text x="${size - (k > 0 ? 2 : 0)}" y="${ty + 5}">${k * 6}</text>`;
  }
  m += `<path class="tick" d="${ticks}"/>`;
  m += `<path class="area" d="M0 ${floor}L${points}L${w - 1} ${floor}Z"/>`;
  m += `<path class="curve" d="M1 ${floor - 1}L${points}V${floor - 1}Z"/>`;
  svg(host, "graph", x, y, w, h, m);
}
graph(main, 2352, 944, 493, 177, 87, 22, 477, [[141, 181], [205, 223], [399, 461]], [221, 343, 465],
  "1 86 84 86 101 84 116 80 132 71 141 63 149 53 155 44 158 41 162 40 166 41 169 44 176 54 181 63 193 72 205 77 221 82 246 86 348 86 369 83 388 78 405 71 421 55 426 43 431 40 436 43 442 64 447 78 453 86 458 78 463 60 466 45 468 40 471 45 476 65 481 78 488 86 492 86", 177);
graph(eq, 186, 166, 611, 270, 133, 33, 594,
  [[95, 175], [255, 279], [306, 345], [321, 331], [361, 411], [449, 566], [485, 509]], [275, 386, 424, 577],
  "1 132 16 132 35 129 59 123 76 114 95 99 111 83 124 71 134 68 145 73 158 85 175 99 199 113 220 121 255 127 302 128 319 121 329 110 334 107 343 115 349 123 363 129 386 132 424 137 452 144 478 150 486 147 496 140 503 148 510 155 518 158 530 156 542 145 554 134 562 131 571 134 581 150 589 158 594 141 598 150 606 130 610 133", 270);

/* output */
box(main, 2548, 1136, 176, "p compressor", "big");
box(main, 2548, 1192, 112, "p limiter");
const gain = make("div", "gain");
const meter = `<div class="meter">${"<i></i>".repeat(13)}</div>`;
const fader = `<div class="fader"><i class="head"></i><i class="knob"></i><i class="tail"></i></div>`;
gain.innerHTML = meter + fader + fader + meter;
place(main, gain, 2542, 1258);
const dac = make("button", "dac");
dac.setAttribute("aria-label", "audio");
dac.innerHTML = `<svg viewBox="0 0 52 50"><path class="fl" d="M0 16Q0 13 3 13H13L28 0V50L13 37H3Q0 37 0 34ZM30 20Q35 25 30 30Z"/><path class="ln" d="M33 17Q39 25 33 33M37 13Q45 25 37 38M41 9Q53 25 41 42"/></svg>`;
place(main, dac, 2562, 1502);

/* eq window */
svg(eq, "cords", 180, 100, 240, 70, `<path class="cord" d="M25 10V66M25 66V60Q25 53 36 53H203Q217 53 217 42V10"/><path class="cord inner" d="M25 10V66M25 66V60Q25 53 36 53H203Q217 53 217 42V10"/>`);
num(eq, 186, 68, 100, "8", "big", "filters");
menu(eq, 378, 68, 140, "display", "wide");
message(eq, 186, 116, 100, "nfilters $1", "dark small");

/* ins window */
[102, 324, 480, 756, 994, 1172, 1386].forEach((x) => menu(ins, x, 80, 114, "out", "flat"));
toggle(ins, 690, 80, "", "vst on");
box(ins, 332, 130, 68, "p eq", "big green");
box(ins, 484, 130, 130, "p reverber", "big lilac");
message(ins, 732, 130, 66, "plug", "dark big");
message(ins, 822, 130, 74, "open", "dark big");
box(ins, 774, 184, 72, "p vst", "big plum");
box(ins, 988, 130, 114, "p chorus", "big brick");
box(ins, 1170, 130, 144, "p delay unit", "big gold");
box(ins, 1386, 130, 138, "p envelope", "big aqua");
```
